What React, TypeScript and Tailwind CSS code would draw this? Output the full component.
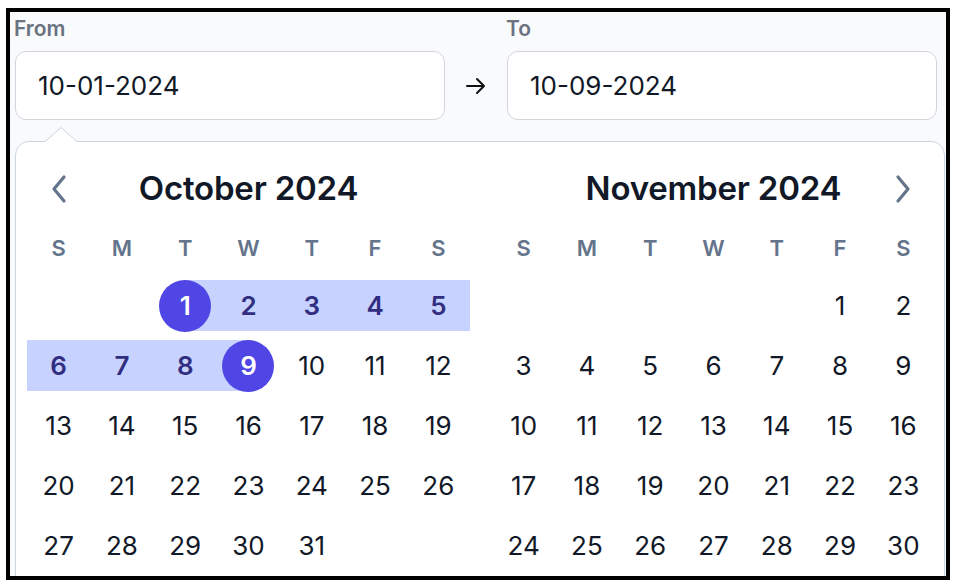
import React from 'react';

type Cell = { day: number | null; state?: 'start' | 'end' | 'mid' };

const WEEKDAYS = ['S', 'M', 'T', 'W', 'T', 'F', 'S'];

// build a month grid; offset = weekday of day 1
const buildMonth = (offset: number, days: number, from?: number, to?: number): Cell[] => {
  const cells: Cell[] = [];
  for (let i = 0; i < offset; i++) cells.push({ day: null });
  for (let d = 1; d <= days; d++) {
    let state: Cell['state'];
    if (from && to) {
      if (d === from) state = 'start';
      else if (d === to) state = 'end';
      else if (d > from && d < to) state = 'mid';
    }
    cells.push({ day: d, state });
  }
  return cells;
};

const ChevronLeft = () => (
  <svg width="20" height="30" viewBox="0 0 20 30" fill="none">
    <polyline points="15,3 5,15 15,27" stroke="#64748b" strokeWidth="3.2" strokeLinecap="round" strokeLinejoin="round" />
  </svg>
);

const ChevronRight = () => (
  <svg width="20" height="30" viewBox="0 0 20 30" fill="none">
    <polyline points="5,3 15,15 5,27" stroke="#64748b" strokeWidth="3.2" strokeLinecap="round" strokeLinejoin="round" />
  </svg>
);

const DayCell: React.FC<{ cell: Cell }> = ({ cell }) => {
  if (cell.day === null) return <div className="h-[51px]" />;

  if (cell.state === 'start' || cell.state === 'end') {
    return (
      <div className="relative h-[51px] flex items-center justify-center">
        <div
          className={`absolute top-0 bottom-0 bg-[#c7d2fe] ${
            cell.state === 'start' ? 'left-1/2 right-0' : 'left-0 right-1/2'
          }`}
        />
        <div className="relative w-[52px] h-[52px] rounded-full bg-[#4f46e5] flex items-center justify-center text-white font-semibold">
          {cell.day}
        </div>
      </div>
    );
  }

  if (cell.state === 'mid') {
    return (
      <div className="h-[51px] bg-[#c7d2fe] flex items-center justify-center text-[#312e81] font-semibold">
        {cell.day}
      </div>
    );
  }

  return <div className="h-[51px] flex items-center justify-center text-[#111827]">{cell.day}</div>;
};

const Month: React.FC<{ title: string; cells: Cell[]; side: 'left' | 'right' }> = ({ title, cells, side }) => (
  <div className="w-[443px] shrink-0">
    <div className="h-[50px] flex items-center pt-[1px]">
      <div className="w-[64px] flex justify-center">{side === 'left' && <ChevronLeft />}</div>
      <div className="flex-1 text-center text-[33px] font-semibold text-[#111827] tracking-[-0.2px]">{title}</div>
      <div className="w-[64px] flex justify-center">{side === 'right' && <ChevronRight />}</div>
    </div>
    <div className="grid grid-cols-7 mt-[15px] h-[40px] items-center">
      {WEEKDAYS.map((w, i) => (
        <div key={i} className="text-center text-[22px] font-semibold text-[#64748b]">
          {w}
        </div>
      ))}
    </div>
    <div className="grid grid-cols-7 gap-y-[9px] mt-[12px] text-[26px]">
      {cells.map((c, i) => (
        <DayCell key={i} cell={c} />
      ))}
    </div>
  </div>
);

const DateInput: React.FC<{ label: string; value: string }> = ({ label, value }) => (
  <div className="w-[430px]">
    <div className="text-[21px] leading-[24px] font-semibold text-[#6b7280] mt-[1px] mb-[10px] -ml-[1px]">{label}</div>
    <div className="h-[69px] rounded-[11px] border border-[#d1d5db] bg-white flex items-center pl-[22px] text-[26px] text-[#111827]">
      {value}
    </div>
  </div>
);

export default function App() {
  const october = buildMonth(2, 31, 1, 9);
  const november = buildMonth(5, 30);

  return (
    <div className="bg-white w-[958px] h-[586px] pt-[8px] pl-[6px]" style={{ fontFamily: 'Inter, "Noto Sans", sans-serif' }}>
      <div className="w-[944px] h-[572px] border-4 border-black bg-[#f9fafb] overflow-hidden pt-[4px] pl-[5px]">
        <div className="flex items-end">
          <DateInput label="From" value="10-01-2024" />
          <div className="w-[62px] h-[69px] flex items-center justify-center">
            <svg width="22" height="18" viewBox="0 0 22 18" fill="none">
              <path d="M2 9h17M12 2l7 7-7 7" stroke="#111" strokeWidth="2" strokeLinecap="round" strokeLinejoin="round" />
            </svg>
          </div>
          <DateInput label="To" value="10-09-2024" />
        </div>

        <div className="relative mt-[21px] w-[930px] h-[460px] bg-white border border-[#cbd5e1] rounded-[14px] pt-[21px] pl-[11px]">
          {/* caret */}
          <svg className="absolute -top-[15px] left-[28px]" width="34" height="16" viewBox="0 0 34 16" fill="none">
            <path d="M0 15.5 L17 0.5 L34 15.5" fill="white" stroke="#cbd5e1" strokeWidth="1" />
            <rect x="0" y="15" width="34" height="2" fill="white" />
          </svg>
          <div className="flex gap-[22px]">
            <Month title="October 2024" cells={october} side="left" />
            <Month title="November 2024" cells={november} side="right" />
          </div>
        </div>
      </div>
    </div>
  );
}
